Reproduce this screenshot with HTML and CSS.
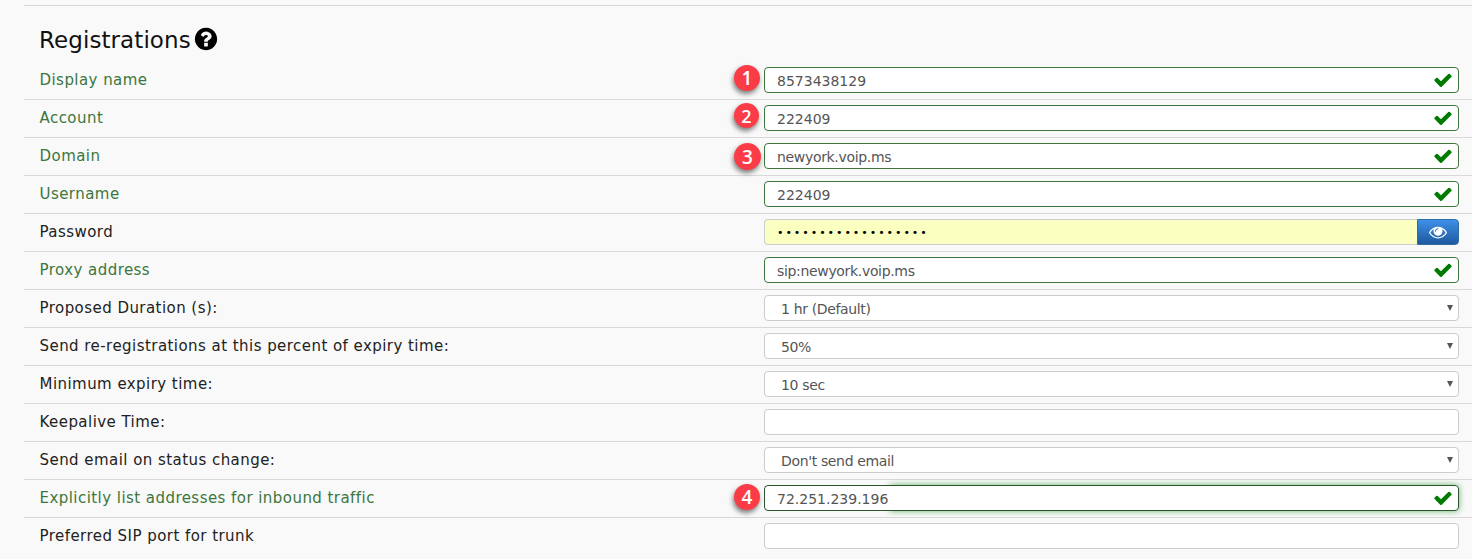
FILE: index.html
```html
<!DOCTYPE html>
<html lang="en">
<head>
<meta charset="utf-8">
<title>Registrations</title>
<link rel="stylesheet" href="styles.css">
</head>
<body>
<svg class="defs" width="0" height="0" aria-hidden="true">
  <symbol id="check" viewBox="0 0 1792 1792"><path d="M1671 566q0 40-28 68l-724 724-136 136q-28 28-68 28t-68-28l-136-136-362-362q-28-28-28-68t28-68l136-136q28-28 68-28t68 28l294 295 656-657q28-28 68-28t68 28l136 136q28 28 28 68z"/></symbol>
</svg>
<main class="panel">
  <h2 class="title">Registrations<svg class="help" viewBox="0 0 1792 1792"><path d="M1024 1376v-192q0-14-9-23t-23-9h-192q-14 0-23 9t-9 23v192q0 14 9 23t23 9h192q14 0 23-9t9-23zm256-672q0-88-55.5-163t-138.5-116-170-41q-243 0-371 213-15 24 8 42l132 100q7 6 19 6 16 0 25-12 53-68 86-92 34-24 86-24 48 0 85.5 26t37.5 59q0 38-20 61t-68 45q-63 28-115.5 86.5t-52.5 125.5v36q0 14 9 23t23 9h192q14 0 23-9t9-23q0-19 21.5-49.5t54.5-49.5q32-18 49-28.5t46-35 44.5-48 28-60.5 12.5-81zm384 192q0 209-103 385.5t-279.5 279.5-385.5 103-385.5-103-279.5-279.5-103-385.5 103-385.5 279.5-279.5 385.5-103 385.5 103 279.5 279.5 103 385.5z"/></svg></h2>

  <div class="row ok">
    <label class="label">Display name</label>
    <div class="field"><span class="badge badge-one">1</span><input class="control" type="text" value="8573438129"><svg class="tick"><use href="#check"/></svg></div>
  </div>
  <div class="row ok">
    <label class="label">Account</label>
    <div class="field"><span class="badge badge-two">2</span><input class="control" type="text" value="222409"><svg class="tick"><use href="#check"/></svg></div>
  </div>
  <div class="row ok">
    <label class="label">Domain</label>
    <div class="field"><span class="badge badge-three">3</span><input class="control word" type="text" value="newyork.voip.ms"><svg class="tick"><use href="#check"/></svg></div>
  </div>
  <div class="row ok">
    <label class="label">Username</label>
    <div class="field"><input class="control" type="text" value="222409"><svg class="tick"><use href="#check"/></svg></div>
  </div>
  <div class="row">
    <label class="label">Password</label>
    <div class="field group"><input class="control secret" type="password" value="aaaaaaaaaaaaaaaaaa"><button class="reveal" type="button"><svg class="eye" viewBox="0 0 1792 1792"><path d="M1664 960q-152-236-381-353 61 104 61 225 0 185-131.5 316.5t-316.5 131.5-316.5-131.5-131.5-316.5q0-121 61-225-229 117-381 353 133 205 333.5 326.5t434.5 121.5 434.5-121.5 333.5-326.5zm-720-384q0-20-14-34t-34-14q-125 0-214.5 89.5t-89.5 214.5q0 20 14 34t34 14 34-14 14-34q0-86 61-147t147-61q20 0 34-14t14-34zm848 384q0 34-20 69-140 230-376.5 368.5t-499.5 138.5-499.5-139-376.5-368q-20-35-20-69t20-69q140-229 376.5-368t499.5-139 499.5 139 376.5 368q20 35 20 69z"/></svg></button></div>
  </div>
  <div class="row ok">
    <label class="label">Proxy address</label>
    <div class="field"><input class="control word" type="text" value="sip:newyork.voip.ms"><svg class="tick"><use href="#check"/></svg></div>
  </div>
  <div class="row">
    <label class="label">Proposed Duration (s):</label>
    <div class="field"><select class="control pick"><option>1 hr (Default)</option></select><span class="caret"></span></div>
  </div>
  <div class="row">
    <label class="label">Send re-registrations at this percent of expiry time:</label>
    <div class="field"><select class="control pick"><option>50%</option></select><span class="caret"></span></div>
  </div>
  <div class="row">
    <label class="label">Minimum expiry time:</label>
    <div class="field"><select class="control pick"><option>10 sec</option></select><span class="caret"></span></div>
  </div>
  <div class="row">
    <label class="label">Keepalive Time:</label>
    <div class="field"><input class="control" type="text"></div>
  </div>
  <div class="row">
    <label class="label">Send email on status change:</label>
    <div class="field"><select class="control pick"><option>Don't send email</option></select><span class="caret"></span></div>
  </div>
  <div class="row ok focus">
    <label class="label">Explicitly list addresses for inbound traffic</label>
    <div class="field"><span class="badge badge-four">4</span><input class="control" type="text" value="72.251.239.196"><svg class="tick"><use href="#check"/></svg></div>
  </div>
  <div class="row last">
    <label class="label">Preferred SIP port for trunk</label>
    <div class="field"><input class="control" type="text"></div>
  </div>
</main>
</body>
</html>
```
FILE: styles.css
```css
* { box-sizing: border-box; }
html, body { height: 100%; }
body {
  margin: 0;
  overflow: hidden;
  background: #f9f9f9;
  font-family: "DejaVu Sans", "Liberation Sans", sans-serif;
}
.defs { position: absolute; }
.panel {
  margin: 5px 0 0 24px;
  border-top: 1px solid #d8d8d8;
}
.title {
  display: flex;
  align-items: center;
  height: 56px;
  margin: 0;
  padding: 12px 0 0 15px;
  font-size: 23px;
  font-weight: 400;
  letter-spacing: 0.08px;
  color: #111;
}
.help {
  width: 26px;
  height: 26px;
  margin: 0 0 2px 2px;
  fill: #000;
}
.row {
  display: flex;
  height: 38px;
  padding-top: 5px;
  border-bottom: 1px solid #d8d8d8;
}
.last { border-bottom: 0; }
.label {
  width: 740px;
  padding: 3px 0 0 15.5px;
  font-size: 15px;
  line-height: 20px;
  letter-spacing: 0.45px;
  color: #222;
}
.ok .label { color: #3c763d; }
.field {
  position: relative;
  flex: 0 0 695px;
  height: 26px;
}
.control {
  display: block;
  width: 100%;
  height: 26px;
  padding: 1px 12px 0;
  border: 1px solid #ccc;
  border-radius: 4px;
  background: #fff;
  font-family: inherit;
  font-size: 14px;
  color: #555;
  outline: none;
}
.word { letter-spacing: -0.33px; }
.ok .control { border-color: #3c763d; }
.pick {
  padding-left: 16px;
  letter-spacing: -0.35px;
  appearance: none;
  -webkit-appearance: none;
}
.caret {
  position: absolute;
  top: 10px;
  right: 6px;
  border-top: 6px solid #555;
  border-left: 3px solid transparent;
  border-right: 3px solid transparent;
}
.tick {
  position: absolute;
  top: 3px;
  right: 6px;
  width: 20px;
  height: 20px;
  fill: #007a00;
}
.group { display: flex; }
.secret {
  flex: 1;
  width: auto;
  border-right: 0;
  border-radius: 4px 0 0 4px;
  background: #fbffc0;
  font-size: 11px;
  letter-spacing: 1.94px;
  color: #000;
}
.reveal {
  display: flex;
  align-items: center;
  justify-content: center;
  width: 42px;
  padding: 0;
  border: 1px solid #2e6da4;
  border-radius: 0 4px 4px 0;
  background: linear-gradient(#3f8fe8, #1d5a9e);
}
.eye { width: 18px; height: 18px; fill: #fff; }
.badge {
  position: absolute;
  left: -30px;
  display: flex;
  align-items: center;
  justify-content: center;
  width: 26px;
  height: 26px;
  border-radius: 50%;
  background: #fb3c46;
  box-shadow: -1px 3px 5px rgba(0, 0, 0, 0.5);
  font-family: "Open Sans", sans-serif;
  font-size: 19px;
  font-weight: 600;
  color: #fff;
  z-index: 2;
}
.badge-one { top: -2px; }
.badge-two {
  top: -2px;
  width: 25px;
  height: 25px;
  font-size: 18px;
}
.badge-three {
  top: 0;
  width: 27px;
  height: 27px;
}
.badge-four { top: -1px; }
.focus .control {
  position: relative;
  border-color: #2b542c;
  background: #fff;
}
.focus .field::before {
  content: "";
  position: absolute;
  inset: 0 0 0 125px;
  border-radius: 4px;
  box-shadow: 0 0 6px #67b168;
}
```
